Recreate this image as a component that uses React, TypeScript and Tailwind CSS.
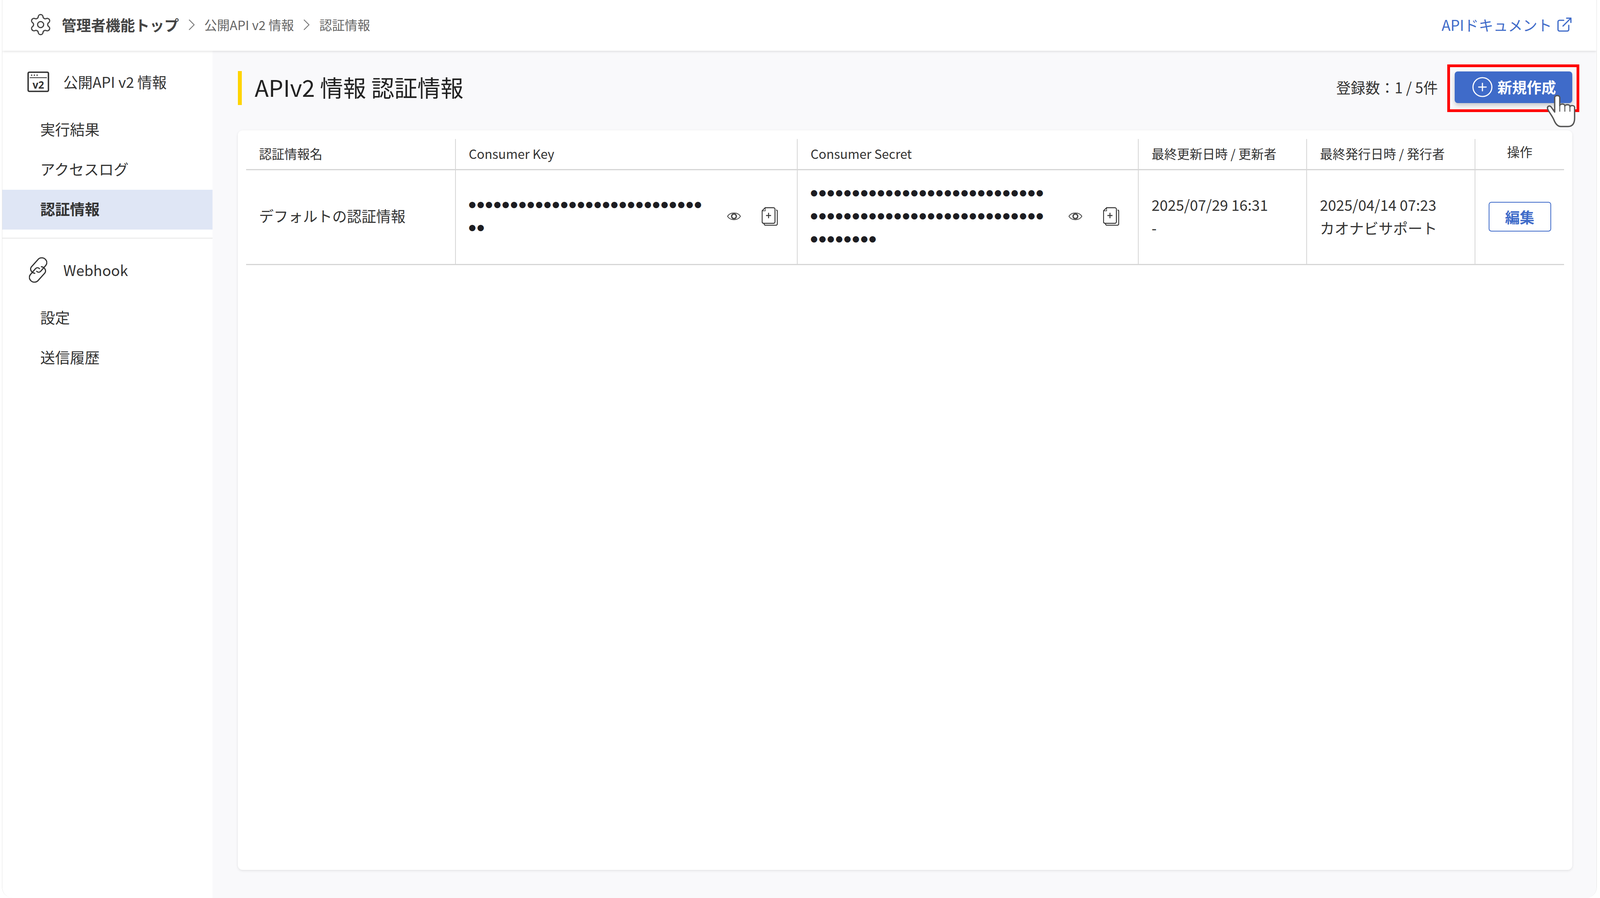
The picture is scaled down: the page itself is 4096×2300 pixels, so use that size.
import { CirclePlus, ExternalLink, Settings } from "lucide-react";

const COLS = "grid grid-cols-[537px_875px_873px_431px_431px_227px]";
const FONT = "[font-family:'Noto_Sans_CJK_JP','Noto_Sans',sans-serif]";

function Chevron() {
  return (
    <svg width="17" height="29" viewBox="0 0 17 29" fill="none" stroke="#777" strokeWidth="2.2" className="shrink-0">
      <path d="M2 1.5 15 14.5 2 27.5" />
    </svg>
  );
}

function WindowIcon() {
  return (
    <svg width="56" height="53" viewBox="0 0 56 53" fill="none" className="shrink-0">
      <rect x="2" y="2" width="52" height="49" rx="3" stroke="#333" strokeWidth="3.6" />
      <path d="M6 16H50" stroke="#333" strokeWidth="2.2" />
      <circle cx="11" cy="9.5" r="1.8" fill="#333" />
      <circle cx="18" cy="9.5" r="1.8" fill="#333" />
      <circle cx="25" cy="9.5" r="1.8" fill="#333" />
      <text x="28" y="44" textAnchor="middle" fontSize="26" fontWeight="700" fill="#333" fontFamily="'Noto Sans'">v2</text>
    </svg>
  );
}

function LinkIcon() {
  const d = "M15 41C6 39 2 31 6 25L23 6C28 0 37 0 42 5C47 10 47 16 43 21L30 36C27 39 23 39 20 36";
  return (
    <svg width="47" height="65" viewBox="0 0 47 65" fill="none" stroke="#333" strokeWidth="3" strokeLinecap="round" className="shrink-0">
      <path d={d} />
      <path d={d} transform="rotate(180 23.5 32.5)" />
    </svg>
  );
}

function EyeIcon() {
  return (
    <svg width="36" height="26" viewBox="0 0 36 26" fill="none" stroke="#444" className="shrink-0">
      <path d="M1.5 13C8 1.5 28 1.5 34.500 13C28 24.500 8 24.500 1.500 13Z" strokeWidth="2" />
      <circle cx="18" cy="13" r="6" strokeWidth="3.4" />
    </svg>
  );
}

function CopyIcon() {
  return (
    <svg width="41" height="48" viewBox="0 0 41 48" fill="none" stroke="#333" strokeWidth="2.400" className="shrink-0">
      <path d="M9 2H30A4 4 0 0 1 34 6V38A4 4 0 0 1 30 42H5A4 4 0 0 1 1 38V10Z" />
      <path d="M9 2V10H1" strokeWidth="1.600" />
      <path d="M37 8A3 3 0 0 1 40 11V43A4 4 0 0 1 36 47H10A4 4 0 0 1 6 43" />
      <path d="M17.500 15V29M11 22H24" />
    </svg>
  );
}

function Hand() {
  return (
    <svg width="72" height="82" viewBox="0 0 72 82" className="absolute left-[3960px] top-[244px] z-30 overflow-visible">
      <path
        d="M20 6C20-1 33-1 33 6V27C33 21 46 21 46 27V28C46 23 59 23 59 28V30C59 25 71 25 71 31V58C71 72 66 80 54 80H36C27 80 22 73 18 63C14 53 5 43 2 35C0 28 7 25 11 30L20 43Z"
        fill="#fff"
        stroke="#555"
        strokeWidth="3.400"
        strokeLinejoin="round"
      />
      <path d="M33 27V42M46 28V42M59 30V42" stroke="#555" strokeWidth="2.400" fill="none" />
    </svg>
  );
}

function NavItem({ label, active, up }: { label: string; active?: boolean; up?: boolean }) {
  return (
    <div className={`h-[102px] pl-[97px] flex items-center text-[38px] text-[#333] ${up ? "pb-[8px]" : ""} ${active ? "bg-[#dfe6f5] font-bold" : ""}`}>
      {label}
    </div>
  );
}

function Th({ children, last, center }: { children: React.ReactNode; last?: boolean; center?: boolean }) {
  return (
    <div className={`h-[77px] flex items-center text-[32.5px] text-[#333] ${center ? "justify-center pb-[13px]" : "pl-[33px] pb-[3px]"} ${last ? "" : "border-r-2 border-[#d6d6d6]"}`}>
      {children}
    </div>
  );
}

function Td({ children, last, center, className }: { children: React.ReactNode; last?: boolean; center?: boolean; className?: string }) {
  return (
    <div className={`flex items-center text-[37.5px] text-[#333] ${center ? "justify-center" : "pl-[33px]"} ${className ?? ""} ${last ? "" : "border-r-2 border-[#d6d6d6]"}`}>
      {children}
    </div>
  );
}

function Secret({ lines, eyeGap }: { lines: string[]; eyeGap?: boolean }) {
  return (
    <div className="flex items-center w-full">
      <div className="w-[613px] shrink-0 text-[18px] leading-[59px] tracking-[3.4px] text-[#1d1d22]">
        {lines.map((l, i) => (
          <div key={i} className="h-[59px]">{l}</div>
        ))}
      </div>
      <div className={`${eyeGap ? "ml-[48px]" : "ml-[47px]"} flex items-center gap-[53px]`}>
        <EyeIcon />
        <CopyIcon />
      </div>
    </div>
  );
}

export default function App() {
  return (
    <div className={`${FONT} relative w-[4096px] h-[2300px] overflow-hidden bg-white`}>
      <div className="ml-[5px] mr-[8px] h-[2300px] flex flex-col rounded-b-[28px] overflow-hidden border-x border-[#e4e4e4] bg-white">
        <header className="relative z-10 h-[130px] shrink-0 flex items-center bg-white shadow-[0_2px_6px_rgba(0,0,0,0.12)] pl-[67px] pr-[60px] pb-[4px]">
          <Settings size={62} strokeWidth={1.200} className="text-[#444] shrink-0" />
          <span className="ml-[23px] text-[37.5px] font-bold text-[#444]">管理者機能トップ</span>
          <span className="ml-[24px]"><Chevron /></span>
          <span className="ml-[24px] text-[32.500px] text-[#666]">公開API v2 情報</span>
          <span className="ml-[24px]"><Chevron /></span>
          <span className="ml-[24px] text-[32.500px] text-[#666]">認証情報</span>
          <span className="ml-auto text-[37.500px] text-[#3f6bc9]">APIドキュメント</span>
          <ExternalLink size={44} strokeWidth={1.700} className="ml-[10px] text-[#3f6bc9] shrink-0" />
        </header>
        <div className="flex flex-1 min-h-0">
          <aside className="w-[538px] shrink-0 bg-white">
            <div className="mt-[44px] mb-[38px] h-[70px] pl-[64px] flex items-center gap-[36px] text-[37.500px] text-[#333]">
              <WindowIcon />
              <span>公開API v2 情報</span>
            </div>
            <NavItem label="実行結果" up />
            <NavItem label="アクセスログ" up />
            <NavItem label="認証情報" active up />
            <div className="mt-[21px] h-[2px] bg-[#e6e6e6]" />
            <div className="mt-[45px] mb-[34px] h-[70px] pl-[68px] flex items-center gap-[41px] text-[37.500px] text-[#333]">
              <LinkIcon />
              <span>Webhook</span>
            </div>
            <NavItem label="設定" />
            <NavItem label="送信履歴" />
          </aside>
          <main className="flex-1 min-w-0 bg-[#f9f9fb] pl-[65px] pr-[62px] pb-[72px] flex flex-col">
            <div className="h-[204px] shrink-0 flex items-center pb-[18px]">
              <div className="h-[87px] w-[10px] mt-[4px] bg-[#ffd400]" />
              <h1 className="ml-[33px] text-[59px] font-normal text-[#222]">APIv2 情報 認証情報</h1>
              <span className="ml-auto mr-[43px] text-[37.500px] text-[#333]">登録数：1 / 5件</span>
              <div className="relative h-[81px] w-[301px] rounded-[8px] bg-[#3f6bc9] flex items-center justify-center gap-[10px] pl-[6px] text-white text-[37.500px] font-bold shadow-[0_6px_12px_rgba(0,0,0,0.2)]">
                <CirclePlus size={58} strokeWidth={1.200} className="shrink-0 -ml-[6px]" />
                <span className="pb-[2px]">新規作成</span>
                <div className="absolute -left-[19px] -top-[18px] w-[338px] h-[122px] border-[7px] border-[#ff0000]" />
              </div>
            </div>
            <div className="flex-1 rounded-[12px] bg-white shadow-[0_2px_6px_rgba(0,0,0,0.1)] pt-[22px] px-[21px]">
              <div className={`${COLS} border-b-[3px] border-[#d6d6d6]`}>
                <Th>認証情報名</Th>
                <Th>Consumer Key</Th>
                <Th>Consumer Secret</Th>
                <Th>最終更新日時 / 更新者</Th>
                <Th>最終発行日時 / 発行者</Th>
                <Th last center>操作</Th>
              </div>
              <div className={`${COLS} h-[243px] border-b-[3px] border-[#d6d6d6]`}>
                <Td className="pb-[7px]">デフォルトの認証情報</Td>
                <Td className="pb-[5px]">
                  <Secret eyeGap lines={["●●●●●●●●●●●●●●●●●●●●●●●●●●●●", "●●"]} />
                </Td>
                <Td className="pb-[5px]">
                  <Secret lines={["●●●●●●●●●●●●●●●●●●●●●●●●●●●●", "●●●●●●●●●●●●●●●●●●●●●●●●●●●●", "●●●●●●●●"]} />
                </Td>
                <Td className="pb-[7px]">
                  <div className="leading-[59px]">
                    <div>2025/07/29 16:31</div>
                    <div>-</div>
                  </div>
                </Td>
                <Td className="pb-[7px]">
                  <div className="leading-[59px]">
                    <div>2025/04/14 07:23</div>
                    <div>カオナビサポート</div>
                  </div>
                </Td>
                <Td last center className="pb-[2px]">
                  <div className="w-[160px] h-[76px] rounded-[7px] border-2 border-[#3f6bc9] flex items-center justify-center font-bold text-[#3f6bc9]">編集</div>
                </Td>
              </div>
            </div>
          </main>
        </div>
      </div>
      <Hand />
    </div>
  );
}
